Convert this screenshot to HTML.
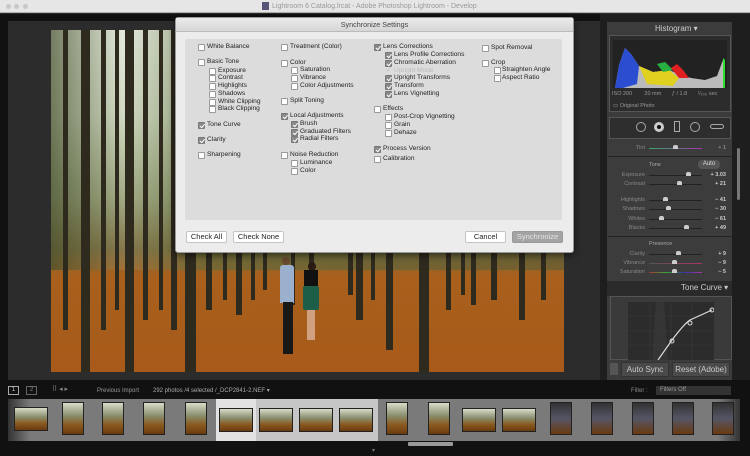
<!DOCTYPE html>
<html><head><meta charset="utf-8"><style>
*{margin:0;padding:0;box-sizing:border-box}
body{width:750px;height:456px;overflow:hidden;background:#2c2c2c;font-family:"Liberation Sans",sans-serif;position:relative}
.a{position:absolute}
.cb{position:absolute;width:7px;height:7px;border:1px solid #9a9a9a;background:#fff;border-radius:1px}
.cb.c{background:#8a8a8a;border-color:#777}
.cb.c:after{content:"";position:absolute;left:1.5px;top:0px;width:2px;height:3.5px;border:solid #fff;border-width:0 1px 1px 0;transform:rotate(40deg)}
.t{position:absolute;font-size:6.6px;color:#222;white-space:nowrap;line-height:8px}
.btn{position:absolute;height:12px;background:#fff;border:1px solid #c4c4c4;border-radius:2px;font-size:7.5px;color:#222;text-align:center;line-height:10px}
.lbl{position:absolute;font-size:5.5px;color:#888;text-align:right;width:40px;left:605px}
.trk{position:absolute;left:649px;width:53px;height:1px;background:#222}
.knob{position:absolute;width:5px;height:4px;background:#ccc;border-radius:2px 2px 0 0}
.val{position:absolute;right:24px;font-size:5.5px;color:#ccc;font-weight:bold}
.tree{position:absolute;background:#2e2a1e}
.th{position:absolute;top:402px;height:33px;width:27px;background:linear-gradient(#d8dcc8 0%,#8a9070 40%,#8a5a20 70%,#6a3a10);border:1px solid #222}
</style></head><body>
<div class="a" style="left:0;top:0;width:750px;height:13px;background:#e6e6e6;border-bottom:1px solid #b0b0b0"></div>
<div class="a" style="left:6px;top:4px;width:5px;height:5px;border-radius:50%;background:#c8c8c8"></div>
<div class="a" style="left:14px;top:4px;width:5px;height:5px;border-radius:50%;background:#c8c8c8"></div>
<div class="a" style="left:23px;top:4px;width:5px;height:5px;border-radius:50%;background:#c8c8c8"></div>
<div class="a" style="left:262px;top:2px;width:7px;height:8px;background:#557"></div>
<div class="t" style="left:272px;top:3px;color:#999;font-size:7px">Lightroom 6 Catalog.lrcat - Adobe Photoshop Lightroom - Develop</div>
<div class="a" style="left:0;top:14px;width:8px;height:366px;background:#111"></div>
<div class="a" style="left:8px;top:14px;width:592px;height:7px;background:#111"></div>
<!-- photo -->
<div class="a" style="left:51px;top:30px;width:513px;height:342px;overflow:hidden;background:linear-gradient(180deg,#e4eadc 0%,#cfd8c0 25%,#98a078 50%,#7a6a3a 64%,#a8601c 72%,#a85a1a 100%)">
<div class="a" style="left:0;top:0;width:513px;height:240px;background:linear-gradient(90deg,rgba(70,80,45,.7) 0%,rgba(230,236,220,.1) 14%,rgba(90,105,60,.55) 30%,rgba(90,100,60,.6) 60%,rgba(80,90,55,.5) 100%)"></div>
<div class="tree" style="left:12px;top:0;width:5px;height:300px"></div>
<div class="tree" style="left:30px;top:0;width:9px;height:342px"></div>
<div class="tree" style="left:50px;top:0;width:5px;height:300px"></div>
<div class="tree" style="left:64px;top:0;width:4px;height:280px"></div>
<div class="tree" style="left:74px;top:0;width:9px;height:342px"></div>
<div class="tree" style="left:92px;top:0;width:5px;height:290px"></div>
<div class="tree" style="left:108px;top:0;width:4px;height:280px"></div>
<div class="tree" style="left:120px;top:0;width:6px;height:300px"></div>
<div class="tree" style="left:134px;top:0;width:11px;height:342px"></div>
<div class="tree" style="left:155px;top:0;width:6px;height:280px"></div>
<div class="tree" style="left:172px;top:0;width:4px;height:270px"></div>
<div class="tree" style="left:185px;top:0;width:6px;height:285px"></div>
<div class="tree" style="left:200px;top:0;width:4px;height:270px"></div>
<div class="tree" style="left:212px;top:0;width:4px;height:260px"></div>
<div class="tree" style="left:240px;top:220px;width:4px;height:55px"></div>
<div class="tree" style="left:258px;top:220px;width:5px;height:50px"></div>
<div class="tree" style="left:297px;top:220px;width:5px;height:45px"></div>
<div class="tree" style="left:305px;top:220px;width:7px;height:70px"></div>
<div class="tree" style="left:320px;top:220px;width:4px;height:50px"></div>
<div class="tree" style="left:335px;top:220px;width:7px;height:100px"></div>
<div class="tree" style="left:368px;top:220px;width:10px;height:122px"></div>
<div class="tree" style="left:395px;top:220px;width:5px;height:60px"></div>
<div class="tree" style="left:410px;top:220px;width:4px;height:45px"></div>
<div class="tree" style="left:420px;top:220px;width:5px;height:55px"></div>
<div class="tree" style="left:440px;top:220px;width:6px;height:50px"></div>
<div class="tree" style="left:468px;top:220px;width:6px;height:70px"></div>
<div class="tree" style="left:490px;top:220px;width:5px;height:50px"></div>
<div class="a" style="left:231px;top:227px;width:8px;height:8px;border-radius:50%;background:#6a4a30"></div>
<div class="a" style="left:229px;top:235px;width:14px;height:38px;background:#9ab0cc;border-radius:3px 3px 0 0"></div>
<div class="a" style="left:232px;top:272px;width:10px;height:52px;background:#181818"></div>
<div class="a" style="left:257px;top:232px;width:8px;height:9px;border-radius:50%;background:#2a1a14"></div>
<div class="a" style="left:253px;top:240px;width:14px;height:16px;background:#111"></div>
<div class="a" style="left:252px;top:256px;width:16px;height:24px;background:#1d5e48;border-radius:2px"></div>
<div class="a" style="left:256px;top:280px;width:8px;height:30px;background:#d0a080"></div>
</div>
<!-- dialog -->
<div class="a" style="left:175px;top:17px;width:399px;height:236px;background:#ececec;border:1px solid #999;border-radius:3px;box-shadow:0 2px 8px rgba(0,0,0,.6)"></div>
<div class="a" style="left:176px;top:18px;width:397px;height:14px;background:linear-gradient(#ebebeb,#d6d6d6);border-bottom:1px solid #bbb"></div>
<div class="t" style="left:176px;top:21px;width:397px;text-align:center;font-size:7.2px;color:#444">Synchronize Settings</div>
<div class="a" style="left:185px;top:39px;width:377px;height:181px;background:#dcdcdc;border-radius:2px"></div>
<div class="cb" style="left:198px;top:44px"></div><div class="t" style="left:207px;top:43px">White Balance</div>
<div class="cb" style="left:198px;top:59px"></div><div class="t" style="left:207px;top:58px">Basic Tone</div>
<div class="cb" style="left:209px;top:68px"></div><div class="t" style="left:218px;top:67px">Exposure</div>
<div class="cb" style="left:209px;top:75px"></div><div class="t" style="left:218px;top:74px">Contrast</div>
<div class="cb" style="left:209px;top:83px"></div><div class="t" style="left:218px;top:82px">Highlights</div>
<div class="cb" style="left:209px;top:91px"></div><div class="t" style="left:218px;top:90px">Shadows</div>
<div class="cb" style="left:209px;top:99px"></div><div class="t" style="left:218px;top:98px">White Clipping</div>
<div class="cb" style="left:209px;top:106px"></div><div class="t" style="left:218px;top:105px">Black Clipping</div>
<div class="cb c" style="left:198px;top:122px"></div><div class="t" style="left:207px;top:121px">Tone Curve</div>
<div class="cb c" style="left:198px;top:137px"></div><div class="t" style="left:207px;top:136px">Clarity</div>
<div class="cb" style="left:198px;top:152px"></div><div class="t" style="left:207px;top:151px">Sharpening</div>
<div class="cb" style="left:281px;top:44px"></div><div class="t" style="left:290px;top:43px">Treatment (Color)</div>
<div class="cb" style="left:281px;top:60px"></div><div class="t" style="left:290px;top:59px">Color</div>
<div class="cb" style="left:291px;top:67px"></div><div class="t" style="left:300px;top:66px">Saturation</div>
<div class="cb" style="left:291px;top:75px"></div><div class="t" style="left:300px;top:74px">Vibrance</div>
<div class="cb" style="left:291px;top:83px"></div><div class="t" style="left:300px;top:82px">Color Adjustments</div>
<div class="cb" style="left:281px;top:98px"></div><div class="t" style="left:290px;top:97px">Split Toning</div>
<div class="cb c" style="left:281px;top:113px"></div><div class="t" style="left:290px;top:112px">Local Adjustments</div>
<div class="cb c" style="left:291px;top:121px"></div><div class="t" style="left:300px;top:120px">Brush</div>
<div class="cb c" style="left:291px;top:129px"></div><div class="t" style="left:300px;top:128px">Graduated Filters</div>
<div class="cb c" style="left:291px;top:136px"></div><div class="t" style="left:300px;top:135px">Radial Filters</div>
<div class="cb" style="left:281px;top:152px"></div><div class="t" style="left:290px;top:151px">Noise Reduction</div>
<div class="cb" style="left:291px;top:160px"></div><div class="t" style="left:300px;top:159px">Luminance</div>
<div class="cb" style="left:291px;top:168px"></div><div class="t" style="left:300px;top:167px">Color</div>
<div class="cb c" style="left:374px;top:44px"></div><div class="t" style="left:383px;top:43px">Lens Corrections</div>
<div class="cb c" style="left:385px;top:52px"></div><div class="t" style="left:394px;top:51px">Lens Profile Corrections</div>
<div class="cb c" style="left:385px;top:60px"></div><div class="t" style="left:394px;top:59px">Chromatic Aberration</div>
<div class="t" style="left:386px;top:67px;color:#bbb">✓</div><div class="t" style="left:394px;top:67px;color:#bbb">Upright Mode</div>
<div class="cb c" style="left:385px;top:75px"></div><div class="t" style="left:394px;top:74px">Upright Transforms</div>
<div class="cb c" style="left:385px;top:83px"></div><div class="t" style="left:394px;top:82px">Transform</div>
<div class="cb c" style="left:385px;top:91px"></div><div class="t" style="left:394px;top:90px">Lens Vignetting</div>
<div class="cb" style="left:374px;top:106px"></div><div class="t" style="left:383px;top:105px">Effects</div>
<div class="cb" style="left:385px;top:114px"></div><div class="t" style="left:394px;top:113px">Post-Crop Vignetting</div>
<div class="cb" style="left:385px;top:122px"></div><div class="t" style="left:394px;top:121px">Grain</div>
<div class="cb" style="left:385px;top:130px"></div><div class="t" style="left:394px;top:129px">Dehaze</div>
<div class="cb c" style="left:374px;top:146px"></div><div class="t" style="left:383px;top:145px">Process Version</div>
<div class="cb" style="left:374px;top:156px"></div><div class="t" style="left:383px;top:155px">Calibration</div>
<div class="cb" style="left:482px;top:45px"></div><div class="t" style="left:491px;top:44px">Spot Removal</div>
<div class="cb" style="left:482px;top:60px"></div><div class="t" style="left:491px;top:59px">Crop</div>
<div class="cb" style="left:494px;top:67px"></div><div class="t" style="left:502px;top:66px">Straighten Angle</div>
<div class="cb" style="left:494px;top:75px"></div><div class="t" style="left:502px;top:74px">Aspect Ratio</div>
<div class="btn" style="left:186px;top:231px;width:41px">Check All</div>
<div class="btn" style="left:233px;top:231px;width:51px">Check None</div>
<div class="btn" style="left:465px;top:231px;width:41px">Cancel</div>
<div class="btn" style="left:512px;top:231px;width:51px;background:#a4a4a4;border-color:#999;color:#e4e4e4">Synchronize</div>
<!-- right side -->
<div class="a" style="left:600px;top:14px;width:150px;height:366px;background:#1e1e1e"></div>
<div class="a" style="left:607px;top:22px;width:125px;height:358px;background:#3c3c3c"></div>
<div class="t" style="left:655px;top:25px;color:#ccc;font-size:8px">Histogram ▾</div>
<div class="a" style="left:609px;top:35px;width:122px;height:77px;background:#2c2c2c;border:1px solid #555"></div>
<svg class="a" style="left:613px;top:40px" width="114" height="48" viewBox="0 0 114 48">
<rect width="114" height="48" fill="#222"/>
<path d="M2 48 L6 25 L12 8 L18 14 L26 26 L40 32 L56 30 L66 34 L78 38 L92 40 L104 36 L110 20 L112 48Z" fill="#bbb"/>
<path d="M2 48 L6 25 L12 8 L18 14 L26 26 L24 44 L10 48Z" fill="#2b4ed0"/>
<path d="M26 26 L40 32 L56 30 L66 38 L60 46 L34 44Z" fill="#e0d020"/>
<path d="M44 24 L52 22 L60 30 L50 32Z" fill="#28b040"/>
<path d="M58 28 L64 24 L70 30 L76 38 L66 38Z" fill="#e02020"/>
<path d="M110 18 L112 20 L112 48 L110 48Z" fill="#30e030"/>
</svg>
<div class="t" style="left:612px;top:90px;color:#999;font-size:5.5px">ISO 200 &nbsp;&nbsp;&nbsp;&nbsp;&nbsp;&nbsp; 20 mm &nbsp;&nbsp;&nbsp;&nbsp;&nbsp; ƒ / 1.8 &nbsp;&nbsp;&nbsp;&nbsp;&nbsp; ¹⁄₂₀₀ sec</div>
<div class="t" style="left:613px;top:102px;color:#999;font-size:5.5px">▭ Original Photo</div>
<div class="a" style="left:609px;top:117px;width:122px;height:22px;background:#2e2e2e;border:1px solid #555"></div>
<div class="a" style="left:636px;top:122px;width:10px;height:10px;border:1px solid #aaa;border-radius:50%"></div>
<div class="a" style="left:654px;top:122px;width:10px;height:10px;border:3px solid #ccc;border-radius:50%;background:#111"></div>
<div class="a" style="left:674px;top:121px;width:6px;height:11px;border:1px solid #aaa"></div>
<div class="a" style="left:690px;top:122px;width:10px;height:10px;border:1px solid #aaa;border-radius:50%"></div>
<div class="a" style="left:710px;top:124px;width:14px;height:5px;border:1px solid #aaa;border-radius:3px"></div>
<div class="a" style="left:608px;top:156px;width:124px;height:1px;background:#222"></div>
<div class="a" style="left:608px;top:236px;width:124px;height:1px;background:#222"></div>
<div class="lbl" style="top:145px">Tint</div><div class="trk" style="top:148px;background:linear-gradient(90deg,#3a6,#a3a)"></div><div class="knob" style="left:673px;top:145px"></div><div class="val" style="top:145px;color:#888">+ 1</div>
<div class="t" style="left:649px;top:161px;color:#aaa;font-size:5.5px">Tone</div>
<div class="a" style="left:698px;top:160px;width:22px;height:9px;background:#555;border-radius:4px;font-size:6px;color:#ddd;text-align:center;line-height:9px">Auto</div>
<div class="lbl" style="top:172px">Exposure</div><div class="trk" style="top:175px"></div><div class="knob" style="left:686px;top:172px"></div><div class="val" style="top:172px">+ 3.03</div>
<div class="lbl" style="top:181px">Contrast</div><div class="trk" style="top:184px"></div><div class="knob" style="left:677px;top:181px"></div><div class="val" style="top:181px">+ 21</div>
<div class="lbl" style="top:197px">Highlights</div><div class="trk" style="top:200px"></div><div class="knob" style="left:663px;top:197px"></div><div class="val" style="top:197px">− 41</div>
<div class="lbl" style="top:206px">Shadows</div><div class="trk" style="top:209px"></div><div class="knob" style="left:666px;top:206px"></div><div class="val" style="top:206px">− 30</div>
<div class="lbl" style="top:216px">Whites</div><div class="trk" style="top:219px"></div><div class="knob" style="left:659px;top:216px"></div><div class="val" style="top:216px">− 61</div>
<div class="lbl" style="top:225px">Blacks</div><div class="trk" style="top:228px"></div><div class="knob" style="left:684px;top:225px"></div><div class="val" style="top:225px">+ 49</div>
<div class="t" style="left:649px;top:240px;color:#aaa;font-size:5.5px">Presence</div>
<div class="lbl" style="top:251px">Clarity</div><div class="trk" style="top:254px"></div><div class="knob" style="left:676px;top:251px"></div><div class="val" style="top:251px">+ 9</div>
<div class="lbl" style="top:260px">Vibrance</div><div class="trk" style="top:263px;background:linear-gradient(90deg,#555,#a36)"></div><div class="knob" style="left:672px;top:260px"></div><div class="val" style="top:260px">− 9</div>
<div class="lbl" style="top:269px">Saturation</div><div class="trk" style="top:272px;background:linear-gradient(90deg,#a33,#3a3,#33a,#a3a)"></div><div class="knob" style="left:672px;top:269px"></div><div class="val" style="top:269px">− 5</div>
<div class="a" style="left:607px;top:281px;width:125px;height:15px;background:#2a2a2a"></div>
<div class="t" style="left:681px;top:284px;color:#ccc;font-size:8px">Tone Curve ▾</div>
<div class="a" style="left:610px;top:296px;width:122px;height:64px;background:#3a3a3a;border:1px solid #555"></div>
<svg class="a" style="left:628px;top:302px" width="86" height="58" viewBox="0 0 86 58">
<rect width="86" height="58" fill="#2c2c2c"/>
<path d="M28 0 L36 0 L40 58 L24 58Z" fill="#353535"/>
<path d="M22 0V58M43 0V58M64 0V58M0 14H86M0 29H86M0 43H86" stroke="#3a3a3a" stroke-width="0.6"/>
<path d="M30 58 L44 38 Q56 22 62 18 L84 8" stroke="#ddd" stroke-width="1.2" fill="none"/>
<circle cx="44" cy="39" r="2" fill="none" stroke="#ddd"/><circle cx="62" cy="21" r="2" fill="none" stroke="#ddd"/><circle cx="84" cy="8" r="2" fill="none" stroke="#ddd"/>
</svg>
<div class="a" style="left:610px;top:363px;width:8px;height:12px;background:#555"></div>
<div class="a" style="left:621px;top:362px;width:48px;height:15px;background:#4a4a4a;border:1px solid #333;font-size:8px;color:#ccc;text-align:center;line-height:13px">Auto Sync</div>
<div class="a" style="left:672px;top:362px;width:58px;height:15px;background:#4a4a4a;border:1px solid #333;font-size:8px;color:#ccc;text-align:center;line-height:13px">Reset (Adobe)</div>
<div class="a" style="left:737px;top:148px;width:3px;height:52px;background:#777;border-radius:2px"></div>
<!-- filmstrip -->
<div class="a" style="left:0;top:380px;width:750px;height:76px;background:#111"></div>
<div class="a" style="left:8px;top:386px;width:11px;height:9px;border:1px solid #aaa;font-size:6px;color:#ccc;text-align:center;line-height:7px">1</div>
<div class="a" style="left:26px;top:386px;width:11px;height:9px;border:1px solid #666;font-size:6px;color:#888;text-align:center;line-height:7px">2</div>
<div class="t" style="left:52px;top:386px;color:#888;font-size:7px">⠿ ◂ ▸</div>
<div class="t" style="left:97px;top:387px;color:#999;font-size:6px">Previous Import</div>
<div class="t" style="left:153px;top:387px;color:#aaa;font-size:6px">292 photos /4 selected /_DCP2841-2.NEF ▾</div>
<div class="t" style="left:631px;top:387px;color:#888;font-size:6px">Filter :</div>
<div class="a" style="left:656px;top:386px;width:75px;height:9px;background:#333;font-size:6px;color:#999;line-height:9px;padding-left:4px">Filters Off</div>
<div class="a" style="left:8px;top:399px;width:732px;height:42px;background:linear-gradient(90deg,#333,#7a7a7a 3%,#7a7a7a 97%,#333)"></div>
<div class="a" style="left:216px;top:399px;width:162px;height:42px;background:#c6c6c6"></div>
<div class="a" style="left:216px;top:399px;width:40px;height:42px;background:#e2e2e2"></div>
<div class="th" style="left:14px;width:34px;top:407px;height:24px"></div>
<div class="th" style="left:62px;width:22px"></div>
<div class="th" style="left:102px;width:22px"></div>
<div class="th" style="left:143px;width:22px"></div>
<div class="th" style="left:185px;width:22px"></div>
<div class="th" style="left:219px;width:34px;top:408px;height:24px"></div>
<div class="th" style="left:259px;width:34px;top:408px;height:24px"></div>
<div class="th" style="left:299px;width:34px;top:408px;height:24px"></div>
<div class="th" style="left:339px;width:34px;top:408px;height:24px"></div>
<div class="th" style="left:386px;width:22px"></div>
<div class="th" style="left:428px;width:22px"></div>
<div class="th" style="left:462px;width:34px;top:408px;height:24px"></div>
<div class="th" style="left:502px;width:34px;top:408px;height:24px"></div>
<div class="th" style="left:550px;width:22px;background:linear-gradient(#333,#556 50%,#6a3a10)"></div>
<div class="th" style="left:591px;width:22px;background:linear-gradient(#333,#556 50%,#6a3a10)"></div>
<div class="th" style="left:632px;width:22px;background:linear-gradient(#333,#556 50%,#6a3a10)"></div>
<div class="th" style="left:672px;width:22px;background:linear-gradient(#333,#556 50%,#6a3a10)"></div>
<div class="th" style="left:712px;width:22px;background:linear-gradient(#333,#556 50%,#6a3a10)"></div>
<div class="a" style="left:408px;top:442px;width:45px;height:4px;background:#999;border-radius:1px"></div>
<div class="t" style="left:372px;top:447px;color:#777;font-size:6px">▾</div>
</body></html>
